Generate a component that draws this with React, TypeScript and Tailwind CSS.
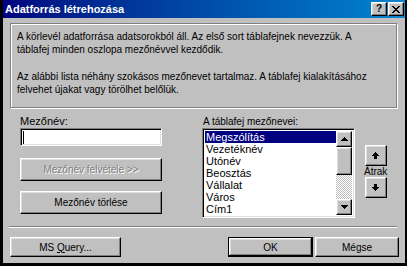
const raised =
  "border border-t-white border-l-white border-r-black border-b-black shadow-[inset_-1px_-1px_0_#808080,inset_1px_1px_0_#dfdfdf] bg-[#c0c0c0]";
const sunken =
  "border border-t-[#808080] border-l-[#808080] border-r-white border-b-white shadow-[inset_1px_1px_0_#000,inset_-1px_-1px_0_#dfdfdf]";

const fields = ["Megszólítás", "Vezetéknév", "Utónév", "Beosztás", "Vállalat", "Város", "Cím1"];

const ArrowUp = () => (
  <svg width="7" height="7" viewBox="0 0 7 7">
    <path d="M3 0h1v1h1v1h1v1h1v1H0V3h1V2h1V1h1z M2 4h3v3H2z" fill="#000" />
  </svg>
);

const ArrowDown = () => (
  <svg width="7" height="7" viewBox="0 0 7 7">
    <path d="M2 0h3v3h2v1H6v1H5v1H4v1H3V6H2V5H1V4H0V3h2z" fill="#000" />
  </svg>
);

const TriUp = () => (
  <svg width="7" height="4" viewBox="0 0 7 4">
    <path d="M3 0h1v1h1v1h1v1h1v1H0V3h1V2h1V1h1z" fill="#000" />
  </svg>
);

const TriDown = () => (
  <svg width="7" height="4" viewBox="0 0 7 4">
    <path d="M0 0h7v1H6v1H5v1H4v1H3V3H2V2H1V1H0z" fill="#000" />
  </svg>
);

export default function App() {
  return (
    <div className="w-[407px] h-[266px] bg-black pl-[3px] pr-[2px] pb-[3px] flex flex-col font-['Liberation_Sans',Arial,sans-serif] text-[10px] leading-[13px] text-black select-none whitespace-nowrap">
      {/* title bar */}
      <div className="h-[18px] shrink-0 flex items-center bg-linear-to-r from-[#000080] to-[#1084d0] pl-[2px] pr-[1px]">
        <span className="font-bold text-white text-[11px]">Adatforrás létrehozása</span>
        <div className="ml-auto flex gap-[1px]">
          <div className={`${raised} w-[16px] h-[14px] flex items-center justify-center font-bold text-[10px] leading-none`}>
            ?
          </div>
          <div className={`${raised} w-[16px] h-[14px] flex items-center justify-center`}>
            <svg width="8" height="7" viewBox="0 0 8 7">
              <path d="M0 0h2v1h1v1h2V1h1V0h2v1H7v1H6v1H5v1h1v1h1v1h1v1H6V6H5V5H3v1H2v1H0V6h1V5h1V4h1V3H2V2H1V1H0z" fill="#000" />
            </svg>
          </div>
        </div>
      </div>

      {/* body */}
      <div className="flex-1 bg-[#c0c0c0] flex flex-col">
        <div className="mt-[5px] ml-[7px] mr-[8px] h-[85px] border border-[#808080] shadow-[inset_1px_1px_0_#fff,1px_1px_0_#fff] pl-[6px] pr-[4px] pt-[6px]">
          <p>
            A körlevél adatforrása adatsorokból áll. Az első sort táblafejnek nevezzük. A
            <br />
            táblafej minden oszlopa mezőnévvel kezdődik.
          </p>
          <p className="mt-[14px]">
            Az alábbi lista néhány szokásos mezőnevet tartalmaz. A táblafej kialakításához
            <br />
            felvehet újakat vagy törölhet belőlük.
          </p>
        </div>

        <div className="mt-[7px] flex">
          {/* left column */}
          <div className="ml-[17px] w-[142px] flex flex-col">
            <div className="h-[13px] text-[11px]">Mezőnév:</div>
            <div className={`${sunken} bg-white h-[18px] flex items-center pl-[2px]`}>
              <div className="w-px h-[13px] bg-black" />
            </div>
            <div className={`${raised} mt-[12px] h-[23px] flex items-center justify-center text-[#808080] [text-shadow:1px_1px_0_#fff]`}>
              Mezőnév felvétele &gt;&gt;
            </div>
            <div className={`${raised} mt-[10px] h-[23px] flex items-center justify-center`}>
              Mezőnév törlése
            </div>
          </div>

          {/* right column */}
          <div className="ml-[40px] flex flex-col">
            <div className="h-[13px] pl-[1px]">A táblafej mezőnevei:</div>
            <div className={`${sunken} bg-white w-[153px] h-[90px] flex p-[2px]`}>
              <div className="flex-1 flex flex-col text-[11px]">
                {fields.map((f, i) => (
                  <div
                    key={f}
                    className={`h-[12.3px] leading-[12px] pl-[1px] ${
                      i === 0 ? "bg-[#000080] text-white" : ""
                    }`}
                  >
                    {f}
                  </div>
                ))}
              </div>
              <div className="w-[16px] flex flex-col">
                <div className={`${raised} h-[16px] flex items-center justify-center`}>
                  <TriUp />
                </div>
                <div className={`${raised} h-[28px]`} />
                <div className="flex-1 bg-[repeating-conic-gradient(#c0c0c0_0%_25%,#ffffff_0%_50%)] bg-[length:2px_2px]" />
                <div className={`${raised} h-[16px] flex items-center justify-center`}>
                  <TriDown />
                </div>
              </div>
            </div>
          </div>

          {/* move buttons */}
          <div className="ml-[9px] mt-[30px] flex flex-col items-center">
            <div className={`${raised} w-[22px] h-[21px] flex items-center justify-center`}>
              <ArrowUp />
            </div>
            <div className="h-[11px] leading-[11px]">Átrak</div>
            <div className={`${raised} w-[22px] h-[21px] flex items-center justify-center`}>
              <ArrowDown />
            </div>
          </div>
        </div>

        {/* separator */}
        <div className="mt-[8px] ml-[6px] mr-[8px] h-[2px] border-t border-t-[#808080] border-b border-b-white" />

        {/* bottom buttons */}
        <div className="mt-[9px] flex ml-[7px] mr-[6px]">
          <div className={`${raised} w-[111px] h-[20px] flex items-center justify-center`}>
            <span>
              MS <span className="underline">Q</span>uery...
            </span>
          </div>
          <div className="ml-auto w-[85px] h-[20px] border border-black bg-[#c0c0c0] shadow-[inset_-1px_-1px_0_#000,inset_1px_1px_0_#fff,inset_-2px_-2px_0_#808080,inset_2px_2px_0_#dfdfdf] flex items-center justify-center">
            OK
          </div>
          <div className={`${raised} ml-[2px] w-[84px] h-[20px] flex items-center justify-center`}>
            Mégse
          </div>
        </div>
      </div>
    </div>
  );
}
